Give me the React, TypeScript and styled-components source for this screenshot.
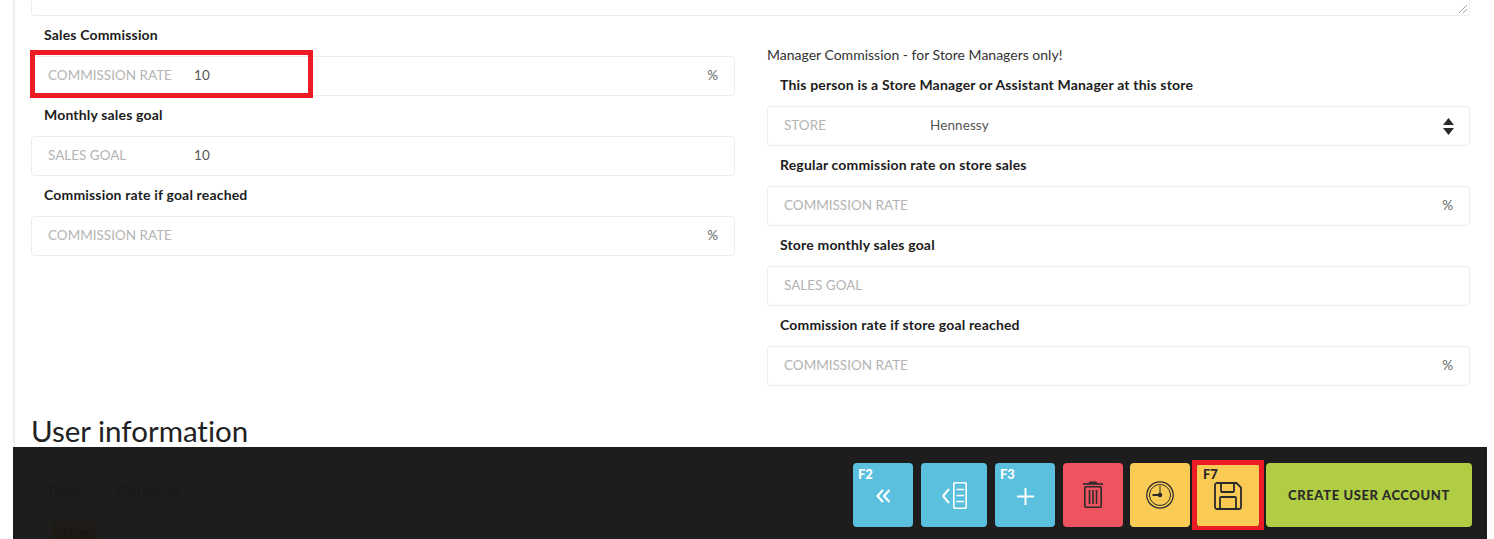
import React from 'react';
import styled, { createGlobalStyle } from 'styled-components';

const GlobalStyle = createGlobalStyle`
    html, body {
        margin: 0;
        padding: 0;
        background: #fff;
        overflow: hidden;
    }
    body {
        font-family: Lato, "Liberation Sans", sans-serif;
        font-variant-ligatures: none;
        color: #1c1c1c;
    }
`;

const Page = styled.div`
    position: relative;
    width: 1494px;
    height: 539px;
    overflow: hidden;
    background: #fff;
`;

const Main = styled.div`
    width: 1474px;
    height: 539px;
    margin-left: 13px;
    box-sizing: border-box;
    padding: 0 17px 0 16px;
    border-left: 2px solid #eeeeee;
    overflow: hidden;
`;

const NotesTail = styled.div`
    position: relative;
    height: 16px;
    box-sizing: border-box;
    border: 1px solid #ededed;
    border-top: none;
    border-radius: 0 0 4px 4px;
`;

const Grip = styled.svg`
    position: absolute;
    right: 1px;
    bottom: 1px;
    width: 10px;
    height: 10px;
`;

const Columns = styled.div`
    display: grid;
    grid-template-columns: 704px 703px;
    column-gap: 32px;
`;

const Column = styled.div`
    display: flex;
    flex-direction: column;
`;

const Note = styled.div`
    height: 21px;
    margin-top: 29px;
    font-size: 14px;
    line-height: 20px;
    color: #333;
`;

const Label = styled.div`
    height: 40px;
    padding-left: 13px;
    font-size: 14px;
    font-weight: 700;
    letter-spacing: 0.17px;
    line-height: 38px;
    color: #1c1c1c;
`;

const Field = styled.div`
    display: flex;
    align-items: center;
    height: 40px;
    box-sizing: border-box;
    padding: 0 16px 2px;
    border: 1px solid #ededed;
    border-radius: 4px;
    font-size: 13.5px;
`;

const FieldName = styled.span`
    width: 146px;
    flex: none;
    color: #b4b4b4;
`;

const FieldValue = styled.span`
    flex: 1;
    color: #555;
    letter-spacing: 0.1px;
`;

const Unit = styled.span`
    color: #666;
`;

const Stepper = styled.svg`
    width: 11px;
    height: 17px;
    margin: 2px -1px 0 0;
`;

const SectionTitle = styled.h2`
    margin: 28px 0 0;
    font-size: 29.5px;
    font-weight: 400;
    line-height: 34px;
    color: #222;
`;

const ActionBar = styled.div`
    position: absolute;
    left: 13px;
    top: 447px;
    width: 1474px;
    height: 92px;
    box-sizing: border-box;
    padding: 16px 15px 0 840px;
    display: flex;
    align-items: flex-start;
    gap: 7px;
    background: #1d1d1d;
`;

const GhostTab = styled.div<{ $left: number; $active?: boolean }>`
    position: absolute;
    left: ${({ $left }) => $left}px;
    top: 23px;
    height: 40px;
    box-sizing: border-box;
    padding: 0 15px;
    border: 1px solid ${({ $active }) => ($active ? '#1a1a1a' : 'transparent')};
    font-size: 14px;
    font-weight: 700;
    line-height: 38px;
    color: #191919;
`;

const GhostButton = styled.div`
    position: absolute;
    left: 38px;
    top: 74px;
    width: 46px;
    height: 18px;
    padding-left: 12px;
    box-sizing: border-box;
    border-radius: 3px 3px 0 0;
    background: #1e1b17;
    font-size: 12px;
    font-weight: 700;
    line-height: 22px;
    color: #181611;
`;

const colors = {
    blue: '#5bc0de',
    red: '#ee5360',
    yellow: '#f9cb55',
    green: '#b0cd43',
};

const ActionButton = styled.button<{ $color: keyof typeof colors; $width: number }>`
    position: relative;
    display: flex;
    align-items: center;
    justify-content: center;
    width: ${({ $width }) => $width}px;
    height: 64px;
    flex: none;
    margin-right: ${({ $color }) => ($color === 'blue' ? 1 : 0)}px;
    padding: 0;
    border: none;
    border-radius: 4px;
    background: ${({ $color }) => colors[$color]};
    color: ${({ $color }) => ($color === 'blue' ? '#fff' : '#2a2a2a')};
    font-family: inherit;
`;

const Key = styled.span<{ $left?: number }>`
    position: absolute;
    left: ${({ $left }) => $left ?? 5}px;
    top: 4px;
    font-size: 13px;
    font-weight: 900;
    line-height: 14px;
`;

const ButtonText = styled.span`
    font-size: 13px;
    font-weight: 900;
    letter-spacing: 0.62px;
`;

const Icon = styled.svg<{ $shift?: number }>`
    margin-top: ${({ $shift }) => $shift ?? 0}px;
    fill: none;
    stroke: currentColor;
`;

const Highlight = styled.div`
    position: absolute;
    box-sizing: border-box;
    border: 5px solid #ed1c24;
    pointer-events: none;
`;

const SalesHighlight = styled(Highlight)`
    left: 30px;
    top: 50px;
    width: 283px;
    height: 48px;
`;

const SaveHighlight = styled(Highlight)`
    left: 1192px;
    top: 460px;
    width: 72px;
    height: 70px;
    border-width: 5px 5px 4px;
`;

const leftFields = [
    { label: 'Sales Commission', name: 'COMMISSION RATE', value: '10', unit: '%' },
    { label: 'Monthly sales goal', name: 'SALES GOAL', value: '10' },
    { label: 'Commission rate if goal reached', name: 'COMMISSION RATE', unit: '%' },
];

const rightFields = [
    { label: 'Regular commission rate on store sales', name: 'COMMISSION RATE', unit: '%' },
    { label: 'Store monthly sales goal', name: 'SALES GOAL' },
    { label: 'Commission rate if store goal reached', name: 'COMMISSION RATE', unit: '%' },
];

const App = () => {
    return (
        <Page>
            <GlobalStyle />
            <Main>
                <NotesTail>
                    <Grip viewBox="0 0 10 10">
                        <path d="M1 9 9 1M5 9 9 5" stroke="#777" strokeWidth="1" strokeDasharray="1 0.5" />
                    </Grip>
                </NotesTail>
                <Columns>
                    <Column>
                        {leftFields.map((f) => (
                            <React.Fragment key={f.label}>
                                <Label>{f.label}</Label>
                                <Field>
                                    <FieldName>{f.name}</FieldName>
                                    <FieldValue>{f.value}</FieldValue>
                                    {f.unit && <Unit>{f.unit}</Unit>}
                                </Field>
                            </React.Fragment>
                        ))}
                    </Column>
                    <Column>
                        <Note>Manager Commission - for Store Managers only!</Note>
                        <Label>This person is a Store Manager or Assistant Manager at this store</Label>
                        <Field>
                            <FieldName>STORE</FieldName>
                            <FieldValue>Hennessy</FieldValue>
                            <Stepper viewBox="0 0 11 17">
                                <path d="M5.5 0 11 7H0zM0 10h11l-5.5 7z" fill="#2a2a2a" />
                            </Stepper>
                        </Field>
                        {rightFields.map((f) => (
                            <React.Fragment key={f.label}>
                                <Label>{f.label}</Label>
                                <Field>
                                    <FieldName>{f.name}</FieldName>
                                    <FieldValue />
                                    {f.unit && <Unit>{f.unit}</Unit>}
                                </Field>
                            </React.Fragment>
                        ))}
                    </Column>
                </Columns>
                <SectionTitle>User information</SectionTitle>
            </Main>
            <ActionBar>
                <GhostTab $left={18} $active>Tasks</GhostTab>
                <GhostTab $left={88}>Attributes</GhostTab>
                <GhostButton>New</GhostButton>
                <ActionButton $color="blue" $width={60}>
                    <Key>F2</Key>
                    <Icon width="15" height="14" viewBox="0 0 15 14" strokeWidth="2.2" $shift={2}>
                        <path d="M7 1 1.5 7 7 13M13.5 1 8 7l5.5 6" />
                    </Icon>
                </ActionButton>
                <ActionButton $color="blue" $width={66}>
                    <Icon width="26" height="27" viewBox="0 0 26 27" strokeWidth="1.6" $shift={1}>
                        <path d="M8 7 2 14l6 7" strokeWidth="2" />
                        <rect x="12.8" y="0.8" width="12.4" height="25.4" rx="1" />
                        <path d="M15.5 7.5h7.5M15.5 13.5h7.5M15.5 19.5h7.5" />
                    </Icon>
                </ActionButton>
                <ActionButton $color="blue" $width={60}>
                    <Key>F3</Key>
                    <Icon width="17" height="17" viewBox="0 0 17 17" strokeWidth="2" $shift={3}>
                        <path d="M8.5 0v17M0 8.5h17" />
                    </Icon>
                </ActionButton>
                <ActionButton $color="red" $width={60}>
                    <Icon width="20" height="27" viewBox="0 0 20 27" strokeWidth="1.6" $shift={-1}>
                        <path d="M0 3h20" />
                        <path d="M6 2.5 7 1h6l1 1.5" fill="currentColor" strokeWidth="1.2" />
                        <rect x="1.8" y="5.8" width="16.4" height="20.4" rx="1" />
                        <path d="M6.5 9v14M10 9v14M13.5 9v14" />
                    </Icon>
                </ActionButton>
                <ActionButton $color="yellow" $width={60}>
                    <Icon width="28" height="28" viewBox="0 0 28 28" strokeWidth="1.3">
                        <circle cx="14" cy="14" r="13.2" />
                        <circle cx="14" cy="14" r="10.5" strokeWidth="1" />
                        <path d="M14 5v9" strokeWidth="1" />
                        <path d="M14 14H6.5" strokeWidth="2" />
                        <circle cx="14" cy="14" r="1.6" fill="currentColor" />
                    </Icon>
                </ActionButton>
                <ActionButton $color="yellow" $width={62}>
                    <Key $left={6}>F7</Key>
                    <Icon width="28" height="28" viewBox="0 0 28 28" strokeWidth="1.8" $shift={2}>
                        <path d="M2.5 1h20L27 5.5V25a2 2 0 0 1-2 2H3a2 2 0 0 1-2-2V3a2 2 0 0 1 1.5-2z" />
                        <path d="M7 1v8a1 1 0 0 0 1 1h11a1 1 0 0 0 1-1V1M6 27V16a1 1 0 0 1 1-1h14a1 1 0 0 1 1 1v11" />
                    </Icon>
                </ActionButton>
                <ActionButton $color="green" $width={206}>
                    <ButtonText>CREATE USER ACCOUNT</ButtonText>
                </ActionButton>
            </ActionBar>
            <SalesHighlight />
            <SaveHighlight />
        </Page>
    );
};

export default App;
